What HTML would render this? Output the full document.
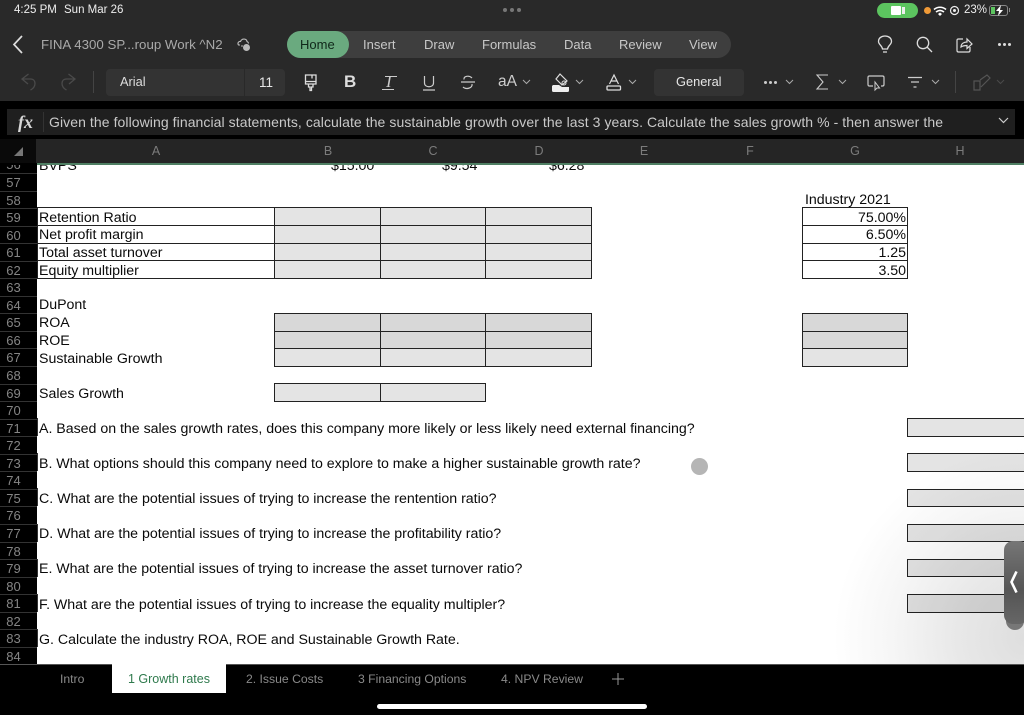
<!DOCTYPE html>
<html><head><meta charset="utf-8"><style>
*{margin:0;padding:0;box-sizing:border-box}
html,body{width:1024px;height:715px;overflow:hidden;background:#000}
body{position:relative;font-family:"Liberation Sans",sans-serif}
.a{position:absolute}
.t{position:absolute;white-space:nowrap;line-height:18px;height:18px}
.ui{color:#c8c8c8;font-size:13px}
.r{position:absolute;left:0;width:37px;height:17.55px;text-align:center;color:#858585;font-size:13px;line-height:18px;border-bottom:1px solid #333;padding-right:10px}
.s{color:#0a0a0a;font-size:14.2px;letter-spacing:-.02px}
.c{position:absolute;text-align:center;color:#7c7c7c;font-size:12.5px;top:143px;width:20px;line-height:16px}
.g{position:absolute;background:#e4e4e4;border:1px solid #222}
.d{background:#d8d8d8}
.w{background:#fff}
.tb{color:#8a8a8a;font-size:12.2px}
svg{position:absolute;overflow:visible;fill:none}
</style></head><body>
<!-- top bars -->
<div class="a" style="left:0;top:0;width:1024px;height:101px;background:#292929"></div>
<div class="a" style="left:0;top:101px;width:1024px;height:38px;background:#000"></div>
<div class="a" style="left:7px;top:109px;width:1008px;height:26px;background:#1f1f1f"></div>
<div class="a" style="left:0;top:139px;width:1024px;height:24px;background:#252525"></div>
<div class="a" style="left:0;top:139px;width:36px;height:24px;background:#0a0a0a"></div>

<div class="t" style="left:14px;top:1px;color:#eee;font-size:11.5px">4:25 PM</div>
<div class="t" style="left:64px;top:1px;color:#eee;font-size:11.5px">Sun Mar 26</div>
<div class="a" style="left:503px;top:8px;width:4px;height:4px;border-radius:50%;background:#777;box-shadow:7px 0 #777,14px 0 #777"></div>
<div class="a" style="left:877px;top:3px;width:41px;height:15px;border-radius:8px;background:#5cc45f"></div>
<div class="a" style="left:891px;top:6px;width:10px;height:9px;border-radius:1px;background:#fff"></div>
<div class="a" style="left:902px;top:7px;width:3px;height:7px;background:#eee"></div>
<div class="a" style="left:924px;top:7px;width:7px;height:7px;border-radius:50%;background:#f09a37"></div>
<svg style="left:933px;top:6px" width="14" height="10"><path d="M1 3.500C4.500 .5 9.500 .5 13 3.500M3 6C5.500 4 8.500 4 11 6" stroke="#fff" stroke-width="1.600"/><path d="M5 8l2-1.500L9 8l-2 2z" fill="#fff"/></svg>
<svg style="left:949px;top:5px" width="11" height="11"><circle cx="5.500" cy="5.500" r="4" stroke="#eee" stroke-width="1.200"/><circle cx="5.500" cy="5.500" r="1.500" fill="#eee"/></svg>
<div class="t" style="left:964px;top:1px;color:#eee;font-size:11.500px">23%</div>
<div class="a" style="left:989px;top:5px;width:19px;height:11px;border:1px solid #888;border-radius:3px"></div>
<div class="a" style="left:991px;top:7px;width:4px;height:7px;background:#5cc45f"></div>
<svg style="left:994px;top:5px" width="11" height="11"><path d="M7 0L2 6h3L4 11l5-6H6z" fill="#fff"/></svg>
<div class="a" style="left:1009px;top:8px;width:1px;height:4px;background:#888"></div>

<!-- title row -->
<svg style="left:12px;top:34px" width="12" height="20"><path d="M10 2L2 10.500 10 19" stroke="#ddd" stroke-width="1.700"/></svg>
<div class="t" style="left:41px;top:36px;color:#a9a9a9;font-size:13.300px">FINA 4300 SP...roup Work ^N2</div>
<svg style="left:236px;top:37px" width="16" height="16"><path d="M4 8H2.500C1 6 3 4 4.500 4.500 6 1 10.500 1.500 11 4.500 12 5 12.500 6 12.500 6.500" stroke="#bbb" stroke-width="1.100"/><circle cx="10.500" cy="10.500" r="3.500" fill="#bbb"/><path d="M5 9H7" stroke="#bbb"/></svg>
<div class="a" style="left:287px;top:31px;width:444px;height:27px;border-radius:14px;background:#3e3e3e"></div>
<div class="a" style="left:287px;top:31px;width:62px;height:27px;border-radius:14px;background:#6aaa7f"></div>
<div class="t" style="left:300px;top:36px;color:#10281a;font-size:13px">Home</div>
<div class="t ui" style="left:363px;top:36px">Insert</div>
<div class="t ui" style="left:424px;top:36px">Draw</div>
<div class="t ui" style="left:482px;top:36px">Formulas</div>
<div class="t ui" style="left:564px;top:36px">Data</div>
<div class="t ui" style="left:619px;top:36px">Review</div>
<div class="t ui" style="left:689px;top:36px">View</div>
<svg style="left:877px;top:35px" width="16" height="19"><path d="M5.500 14C5 10.500 1.500 9.500 1.500 6.500 1.500 3 4.500 1 8 1s6.500 2 6.500 5.500C14.500 9.500 11 10.500 10.500 14zM6 17h4" stroke="#ddd" stroke-width="1.300"/></svg>
<svg style="left:916px;top:36px" width="17" height="17"><circle cx="7" cy="7" r="5.700" stroke="#ddd" stroke-width="1.300"/><path d="M11 11l5 5" stroke="#ddd" stroke-width="1.300"/></svg>
<svg style="left:956px;top:36px" width="17" height="17"><path d="M7 3H2.500Q1 3 1 4.500V14.500Q1 16 2.500 16h10q1.500 0 1.500-1.500V11" stroke="#ddd" stroke-width="1.200"/><path d="M5 11C5 7.500 8 6 11 6V3l5 5-5 4.500V9.500C8.500 9.500 6.500 10 5 11z" stroke="#ddd" stroke-width="1.200"/></svg>
<div class="a" style="left:998px;top:43px;width:3px;height:3px;border-radius:50%;background:#ddd;box-shadow:5px 0 #ddd,10px 0 #ddd"></div>

<!-- toolbar -->
<svg style="left:21px;top:73px" width="16" height="18"><path d="M7.500 1L1 6l6 5M1 6h8.500c6 0 6 8 0 11" stroke="#4a4a4a" stroke-width="1.300"/></svg>
<svg style="left:60px;top:73px" width="16" height="18"><path d="M8.500 1L15 6l-6 5M15 6H6.500c-6 0-6 8 0 11" stroke="#4a4a4a" stroke-width="1.300"/></svg>
<div class="a" style="left:93px;top:71px;width:1px;height:22px;background:#444"></div>
<div class="a" style="left:106px;top:69px;width:179px;height:27px;border-radius:4px;background:#333"></div>
<div class="a" style="left:244px;top:69px;width:1px;height:27px;background:#292929"></div>
<div class="t" style="left:120px;top:73px;color:#ddd;font-size:12.800px">Arial</div>
<div class="t" style="left:259px;top:74px;color:#e8e8e8;font-size:13.500px">11</div>
<svg style="left:304px;top:74px" width="14" height="18"><path d="M1.500 1h10.500v9H1.500zM1.500 7.500h10.500M8 1v3.500M4.500 10v3h1.500v3.500h1.500V13H9v-3" stroke="#ddd" stroke-width="1.300"/></svg>
<div class="t" style="left:344px;top:73px;color:#ddd;font-size:17px;font-weight:700">B</div>
<div class="t" style="left:386px;top:73px;color:#ccc;font-size:17px;font-family:'Liberation Serif',serif;font-style:italic">I</div>
<div class="a" style="left:382px;top:89px;width:12px;height:1px;background:#ccc"></div>
<div class="a" style="left:385px;top:76px;width:12px;height:1px;background:#ccc"></div>
<svg style="left:423px;top:75px" width="13" height="16"><path d="M1.500 1v7c0 5 9 5 9 0V1M0 15h12" stroke="#ccc" stroke-width="1.200"/></svg>
<svg style="left:461px;top:75px" width="14" height="16"><path d="M11 3C8 0 2.500 1 3 4.500M0 7h14M11 9c1 4-6 6-9 3" stroke="#ccc" stroke-width="1.200"/></svg>
<div class="t" style="left:498px;top:73px;color:#ccc;font-size:15.500px">aA</div>
<svg style="left:522px;top:79px" width="9" height="6"><path d="M1 1l3.500 3.500L8 1" stroke="#aaa"/></svg>
<svg style="left:552px;top:72px" width="18" height="20"><path d="M8 2l7 7-5 4-6-6z" stroke="#ddd" stroke-width="1.200"/><circle cx="12" cy="11" r="2" stroke="#ddd"/><path d="M1 13h6l3 2h7v3.500q0 1.500-1.500 1.500h-14Q0 20 0 18.500V14z" fill="#eee"/></svg>
<svg style="left:575px;top:79px" width="9" height="6"><path d="M1 1l3.500 3.500L8 1" stroke="#aaa"/></svg>
<svg style="left:606px;top:74px" width="16" height="17"><path d="M3.500 10L8 1l4.500 9M5 7h6" stroke="#ddd" stroke-width="1.200"/><rect x="1" y="12" width="13.500" height="4" rx="1" stroke="#ddd" stroke-width="1.300"/></svg>
<svg style="left:628px;top:79px" width="9" height="6"><path d="M1 1l3.500 3.500L8 1" stroke="#aaa"/></svg>
<div class="a" style="left:654px;top:69px;width:90px;height:27px;border-radius:4px;background:#333"></div>
<div class="t" style="left:676px;top:73px;color:#e6e6e6;font-size:12.800px">General</div>
<div class="a" style="left:764px;top:81px;width:3px;height:3px;border-radius:50%;background:#ccc;box-shadow:5px 0 #ccc,10px 0 #ccc"></div>
<svg style="left:785px;top:79px" width="9" height="6"><path d="M1 1l3.500 3.500L8 1" stroke="#aaa"/></svg>
<svg style="left:816px;top:74px" width="13" height="16"><path d="M12 1H1l6 7-6 7h11" stroke="#ccc" stroke-width="1.100"/></svg>
<svg style="left:838px;top:79px" width="9" height="6"><path d="M1 1l3.500 3.500L8 1" stroke="#aaa"/></svg>
<svg style="left:867px;top:75px" width="18" height="16"><path d="M6 11H2.500Q1 11 1 9.500V2.500Q1 1 2.500 1h13Q17 1 17 2.500v7Q17 11 15.500 11H14" stroke="#ccc" stroke-width="1.200"/><path d="M8 7v8l2-2 2.500 0z" stroke="#ccc"/></svg>
<svg style="left:908px;top:76px" width="15" height="13"><path d="M0 1.500h14M3 6h8M5.500 11h3" stroke="#ccc" stroke-width="1.300"/></svg>
<svg style="left:931px;top:79px" width="9" height="6"><path d="M1 1l3.500 3.500L8 1" stroke="#aaa"/></svg>
<div class="a" style="left:955px;top:71px;width:1px;height:22px;background:#444"></div>
<svg style="left:973px;top:74px" width="18" height="17"><path d="M1 7h6v9H1zM7 6l7-5 3 3-9 9" stroke="#555" stroke-width="1.200"/></svg>
<svg style="left:996px;top:79px" width="9" height="6"><path d="M1 1l3.500 3.500L8 1" stroke="#4a4a4a"/></svg>

<!-- formula bar -->
<div class="t" style="left:18px;top:113px;color:#d8d8d8;font-size:18px;font-family:'Liberation Serif',serif;font-style:italic;font-weight:700">fx</div>
<div class="a" style="left:43px;top:112px;width:1px;height:20px;background:#333"></div>
<div class="t" style="left:49px;top:113px;color:#c9c9c9;font-size:14px;letter-spacing:.075px">Given the following financial statements, calculate the sustainable growth over the last 3 years. Calculate the sales growth % - then answer the</div>
<svg style="left:998px;top:117px" width="11" height="7"><path d="M1 1l4.500 4.500L10 1" stroke="#ccc" stroke-width="1.200"/></svg>

<!-- column heads -->
<svg style="left:14px;top:146px" width="10" height="10"><path d="M9 1V10H0z" fill="#777"/></svg>
<div class="c" style="left:146px">A</div><div class="c" style="left:318px">B</div><div class="c" style="left:423px">C</div><div class="c" style="left:529px">D</div><div class="c" style="left:634px">E</div><div class="c" style="left:740px">F</div><div class="c" style="left:845px">G</div><div class="c" style="left:950px">H</div>

<!-- sheet -->
<div class="a" style="left:0;top:165px;width:37px;height:499px;background:#000"></div>
<div class="a" style="left:37px;top:165px;width:987px;height:499px;background:#fff"></div>

<div class="a" style="left:0;top:165px;width:37px;height:499px;overflow:hidden">
<div class="r" style="top:-9px">56</div>
<div class="r" style="top:9px">57</div>
<div class="r" style="top:26.500px">58</div>
<div class="r" style="top:44px">59</div>
<div class="r" style="top:61.500px">60</div>
<div class="r" style="top:79px">61</div>
<div class="r" style="top:96.600px">62</div>
<div class="r" style="top:114px">63</div>
<div class="r" style="top:131.700px">64</div>
<div class="r" style="top:149.300px">65</div>
<div class="r" style="top:166.800px">66</div>
<div class="r" style="top:184.400px">67</div>
<div class="r" style="top:202px">68</div>
<div class="r" style="top:219.500px">69</div>
<div class="r" style="top:237px">70</div>
<div class="r" style="top:254.600px">71</div>
<div class="r" style="top:272.200px">72</div>
<div class="r" style="top:289.700px">73</div>
<div class="r" style="top:307.300px">74</div>
<div class="r" style="top:324.800px">75</div>
<div class="r" style="top:342.400px">76</div>
<div class="r" style="top:360px">77</div>
<div class="r" style="top:377.500px">78</div>
<div class="r" style="top:395px">79</div>
<div class="r" style="top:412.600px">80</div>
<div class="r" style="top:430.200px">81</div>
<div class="r" style="top:447.700px">82</div>
<div class="r" style="top:465.300px">83</div>
<div class="r" style="top:482.800px">84</div>
</div>

<!-- partial row 56 -->
<div class="a" style="left:37px;top:165px;width:987px;height:8px;overflow:hidden">
<div class="t s" style="left:2px;top:-8px">BVPS</div>
<div class="t s" style="left:294px;top:-8px">$15.00</div>
<div class="t s" style="left:405px;top:-8px">$9.54</div>
<div class="t s" style="left:512px;top:-8px">$6.28</div>
</div>
<div class="a" style="left:37px;top:163px;width:987px;height:2px;background:#4f7f63"></div>

<!-- row 59-62 label -->
<div class="g w" style="left:37px;top:207px;width:238px;height:19px"></div>
<div class="g w" style="left:37px;top:225px;width:238px;height:19px"></div>
<div class="g w" style="left:37px;top:243px;width:238px;height:18px"></div>
<div class="g w" style="left:37px;top:260px;width:238px;height:19px"></div>
<div class="t s" style="left:39px;top:209px">Retention Ratio</div>
<div class="t s" style="left:39px;top:226px">Net profit margin</div>
<div class="t s" style="left:39px;top:244px">Total asset turnover</div>
<div class="t s" style="left:39px;top:262px">Equity multiplier</div>

<div class="g" style="left:274px;top:207px;width:107px;height:19px"></div><div class="g" style="left:380px;top:207px;width:106px;height:19px"></div><div class="g" style="left:485px;top:207px;width:107px;height:19px"></div>
<div class="g" style="left:274px;top:225px;width:107px;height:19px"></div><div class="g" style="left:380px;top:225px;width:106px;height:19px"></div><div class="g" style="left:485px;top:225px;width:107px;height:19px"></div>
<div class="g" style="left:274px;top:243px;width:107px;height:18px"></div><div class="g" style="left:380px;top:243px;width:106px;height:18px"></div><div class="g" style="left:485px;top:243px;width:107px;height:18px"></div>
<div class="g" style="left:274px;top:260px;width:107px;height:19px"></div><div class="g" style="left:380px;top:260px;width:106px;height:19px"></div><div class="g" style="left:485px;top:260px;width:107px;height:19px"></div>

<div class="t s" style="left:805px;top:191px">Industry 2021</div>
<div class="g w" style="left:802px;top:207px;width:106px;height:19px"></div>
<div class="g w" style="left:802px;top:225px;width:106px;height:19px"></div>
<div class="g w" style="left:802px;top:243px;width:106px;height:18px"></div>
<div class="g w" style="left:802px;top:260px;width:106px;height:19px"></div>
<div class="t s" style="right:118px;top:209px">75.00%</div>
<div class="t s" style="right:118px;top:226px">6.50%</div>
<div class="t s" style="right:118px;top:244px">1.25</div>
<div class="t s" style="right:118px;top:262px">3.50</div>

<div class="t s" style="left:39px;top:296px">DuPont</div>
<div class="t s" style="left:39px;top:314px">ROA</div>
<div class="t s" style="left:39px;top:332px">ROE</div>
<div class="t s" style="left:39px;top:350px">Sustainable Growth</div>
<div class="t s" style="left:39px;top:385px">Sales Growth</div>

<div class="g d" style="left:274px;top:313px;width:107px;height:19px"></div><div class="g d" style="left:380px;top:313px;width:106px;height:19px"></div><div class="g d" style="left:485px;top:313px;width:107px;height:19px"></div>
<div class="g d" style="left:274px;top:331px;width:107px;height:18px"></div><div class="g d" style="left:380px;top:331px;width:106px;height:18px"></div><div class="g d" style="left:485px;top:331px;width:107px;height:18px"></div>
<div class="g" style="left:274px;top:348px;width:107px;height:19px"></div><div class="g" style="left:380px;top:348px;width:106px;height:19px"></div><div class="g" style="left:485px;top:348px;width:107px;height:19px"></div>
<div class="g d" style="left:802px;top:313px;width:106px;height:19px"></div>
<div class="g d" style="left:802px;top:331px;width:106px;height:18px"></div>
<div class="g" style="left:802px;top:348px;width:106px;height:19px"></div>
<div class="g" style="left:274px;top:383px;width:107px;height:19px"></div><div class="g" style="left:380px;top:383px;width:106px;height:19px"></div>

<div class="a" style="left:37px;top:418px;width:1px;height:18px;background:#333"></div>
<div class="a" style="left:37px;top:453px;width:1px;height:18px;background:#333"></div>
<div class="a" style="left:37px;top:488px;width:1px;height:18px;background:#333"></div>
<div class="a" style="left:37px;top:524px;width:1px;height:18px;background:#333"></div>
<div class="a" style="left:37px;top:559px;width:1px;height:18px;background:#333"></div>
<div class="a" style="left:37px;top:594px;width:1px;height:18px;background:#333"></div>
<div class="a" style="left:37px;top:629px;width:1px;height:18px;background:#333"></div>

<div class="t s" style="left:39px;top:420px">A. Based on the sales growth rates, does this company more likely or less likely need external financing?</div>
<div class="t s" style="left:39px;top:455px">B. What options should this company need to explore to make a higher sustainable growth rate?</div>
<div class="t s" style="left:39px;top:490px">C. What are the potential issues of trying to increase the rentention ratio?</div>
<div class="t s" style="left:39px;top:525px">D. What are the potential issues of trying to increase the profitability ratio?</div>
<div class="t s" style="left:39px;top:560px">E. What are the potential issues of trying to increase the asset turnover ratio?</div>
<div class="t s" style="left:39px;top:596px">F. What are the potential issues of trying to increase the equality multipler?</div>
<div class="t s" style="left:39px;top:631px">G. Calculate the industry ROA, ROE and Sustainable Growth Rate.</div>

<div class="g" style="left:907px;top:418px;width:120px;height:19px"></div>
<div class="g" style="left:907px;top:453px;width:120px;height:19px"></div>
<div class="g" style="left:907px;top:489px;width:120px;height:18px"></div>
<div class="g" style="left:907px;top:524px;width:120px;height:18px"></div>
<div class="g" style="left:907px;top:559px;width:120px;height:18px"></div>
<div class="g" style="left:907px;top:594px;width:120px;height:19px"></div>

<div class="a" style="left:691px;top:458px;width:17px;height:17px;border-radius:50%;background:#b5b5b5"></div>

<!-- glare -->
<div class="a" style="left:640px;top:400px;width:384px;height:264px;mix-blend-mode:multiply;background:radial-gradient(ellipse 190px 190px at 100% 90%,#dedede 0%,#e8e8e8 35%,#f6f6f6 70%,#fff 100%)"></div>

<!-- side handle -->
<div class="a" style="left:1006px;top:600px;width:18px;height:30px;border-radius:0 0 9px 9px;background:#777"></div>
<div class="a" style="left:1004px;top:541px;width:24px;height:83px;border-radius:9px;background:linear-gradient(#767676,#555 60%,#666)"></div>
<svg style="left:1009px;top:570px" width="10" height="24"><path d="M7.500 1.500L2.500 12l5 10.500" stroke="#fff" stroke-width="2.600"/></svg>

<!-- tabs -->
<div class="a" style="left:0;top:664px;width:1024px;height:51px;background:#000"></div>
<div class="a" style="left:0;top:664px;width:1024px;height:1px;background:#555"></div>
<div class="a" style="left:112px;top:664px;width:114px;height:29px;background:#fff"></div>
<div class="t tb" style="left:60px;top:670px">Intro</div>
<div class="t" style="left:128px;top:670px;color:#2f7a4d;font-size:12.500px">1 Growth rates</div>
<div class="t tb" style="left:246px;top:670px">2. Issue Costs</div>
<div class="t tb" style="left:358px;top:670px">3 Financing Options</div>
<div class="t tb" style="left:501px;top:670px">4. NPV Review</div>
<svg style="left:612px;top:673px" width="12" height="12"><path d="M6 0v12M0 6h12" stroke="#999"/></svg>
<div class="a" style="left:377px;top:704px;width:270px;height:5px;border-radius:3px;background:#fff"></div>
</body></html>
